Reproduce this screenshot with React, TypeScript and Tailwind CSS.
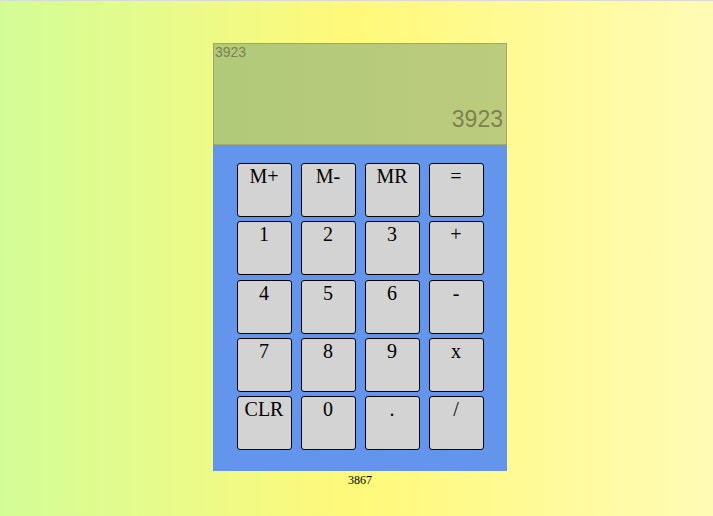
import React from "react";

const keys = ["M+", "M-", "MR", "=", "1", "2", "3", "+", "4", "5", "6", "-", "7", "8", "9", "x", "CLR", "0", ".", "/"];

export default function App() {
  return (
    <div className="w-[713px] h-[516px] border-t border-[#d9d9d9] bg-[linear-gradient(to_right,#d3fc98_0%,#fff97a_50%,#fffbb6_100%)] flex flex-col items-center pl-[7px]">
      <div className="mt-[42px] w-[294px] flex flex-col">
        <div className="h-[102px] border border-[#a3a468] bg-[linear-gradient(to_right,#b1c97a,#bccb7d)] flex flex-col justify-between font-['Liberation_Sans',Arial,sans-serif] text-[#7f8050]">
          <div className="text-[14px] leading-[16px] pl-[1px]">3923</div>
          <div className="text-[23px] leading-[23px] text-right pr-[3px] pb-[13px]">3923</div>
        </div>
        <div className="h-[326px] bg-[#6495ed] pt-[18px] flex justify-center">
          <div className="grid grid-cols-[repeat(4,55px)] gap-x-[9px] gap-y-[4.25px] h-fit">
            {keys.map((k) => (
              <div
                key={k}
                className="h-[54px] bg-[#d3d3d3] border border-black rounded-[3px] flex justify-center items-start pt-[1px] font-['Liberation_Serif','Times_New_Roman',serif] text-[20px] leading-[23px] text-black"
              >
                {k}
              </div>
            ))}
          </div>
        </div>
        <div className="text-center font-['Liberation_Serif','Times_New_Roman',serif] text-[12px] leading-[14px] pt-[2px] text-black">3867</div>
      </div>
    </div>
  );
}
